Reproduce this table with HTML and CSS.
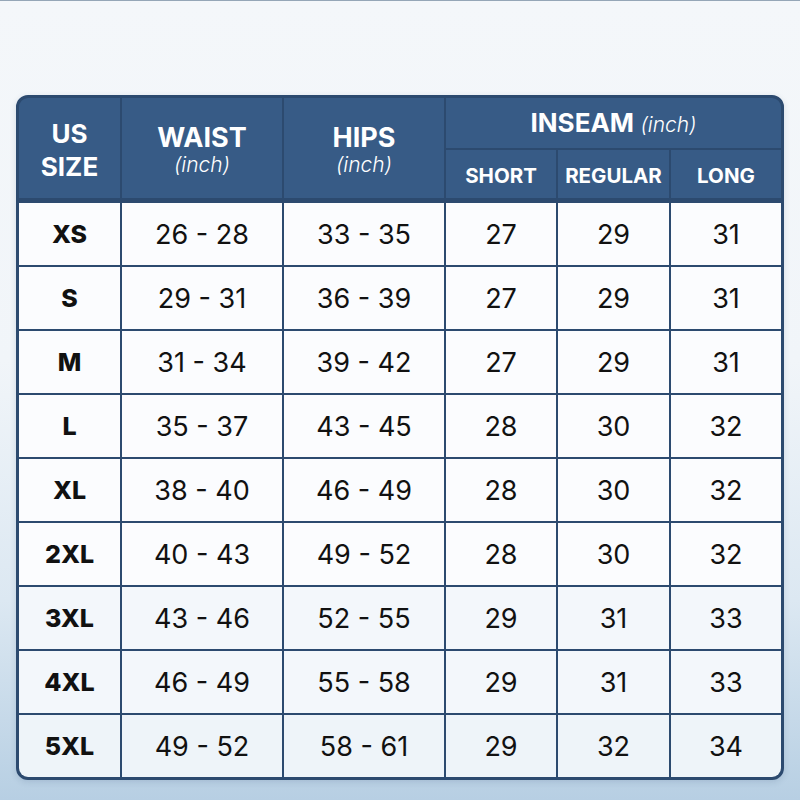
FILE: index.html
```html
<!DOCTYPE html>
<html>
<head>
<meta charset="utf-8">
<link rel="stylesheet" href="styles.css">
</head>
<body>
<div class="page">
  <div class="chart">
    <div class="cell head c-size r-span">US<br>SIZE</div>
    <div class="cell head c-waist r-span"><span class="ht">WAIST</span><span class="unit">(inch)</span></div>
    <div class="cell head c-hips r-span"><span class="ht">HIPS</span><span class="unit">(inch)</span></div>
    <div class="cell head c-inseam"><span class="ht">INSEAM</span>&nbsp;<span class="unit">(inch)</span></div>
    <div class="cell head sub">SHORT</div>
    <div class="cell head sub">REGULAR</div>
    <div class="cell head sub">LONG</div>
    <div class="hline"></div>

    <div class="cell lbl">XS</div><div class="cell">26 - 28</div><div class="cell">33 - 35</div><div class="cell">27</div><div class="cell">29</div><div class="cell">31</div>
    <div class="cell lbl">S</div><div class="cell">29 - 31</div><div class="cell">36 - 39</div><div class="cell">27</div><div class="cell">29</div><div class="cell">31</div>
    <div class="cell lbl">M</div><div class="cell">31 - 34</div><div class="cell">39 - 42</div><div class="cell">27</div><div class="cell">29</div><div class="cell">31</div>
    <div class="cell lbl">L</div><div class="cell">35 - 37</div><div class="cell">43 - 45</div><div class="cell">28</div><div class="cell">30</div><div class="cell">32</div>
    <div class="cell lbl">XL</div><div class="cell">38 - 40</div><div class="cell">46 - 49</div><div class="cell">28</div><div class="cell">30</div><div class="cell">32</div>
    <div class="cell lbl">2XL</div><div class="cell">40 - 43</div><div class="cell">49 - 52</div><div class="cell">28</div><div class="cell">30</div><div class="cell">32</div>
    <div class="cell lbl">3XL</div><div class="cell">43 - 46</div><div class="cell">52 - 55</div><div class="cell">29</div><div class="cell">31</div><div class="cell">33</div>
    <div class="cell lbl">4XL</div><div class="cell">46 - 49</div><div class="cell">55 - 58</div><div class="cell">29</div><div class="cell">31</div><div class="cell">33</div>
    <div class="cell lbl">5XL</div><div class="cell">49 - 52</div><div class="cell">58 - 61</div><div class="cell">29</div><div class="cell">32</div><div class="cell">34</div>
  </div>
</div>
</body>
</html>
```
FILE: styles.css
```css
html, body {
  margin: 0;
  padding: 0;
}
body {
  width: 800px;
  height: 800px;
  overflow: hidden;
  font-family: "Inter", "Open Sans", sans-serif;
}
.page {
  width: 800px;
  height: 800px;
  box-sizing: border-box;
  padding: 94px 16px 0 16px;
  border-top: 1px solid #95a6b7;
  background: linear-gradient(180deg, #f4f7fa 0%, #f1f5f9 45%, #dce8f2 75%, #b7cfe3 100%);
}
.chart {
  width: 768px;
  box-sizing: border-box;
  border: 3px solid #2c4a6f;
  border-radius: 12px;
  overflow: hidden;
  background: #2c4a6f;
  display: grid;
  grid-template-columns: 101px 160px 160px 110px 111px 110px;
  grid-template-rows: 50px 48px 1px repeat(9, 62px);
  column-gap: 2px;
  row-gap: 2px;
  box-shadow: 0 2px 6px rgba(40, 70, 110, 0.15);
}
.cell {
  display: flex;
  align-items: center;
  justify-content: center;
  background: #fbfcfe;
  color: #111;
  font-size: 27px;
  font-weight: 400;
}
.chart > .cell:nth-last-child(-n+18) { background: #f3f7fb; }
.chart > .cell:nth-last-child(-n+6) { background: #eef4f9; }
.head {
  background: #375b86;
  color: #fff;
  font-weight: 700;
  flex-direction: column;
  text-align: center;
  line-height: 33px;
}
.r-span {
  grid-row: 1 / 3;
  font-size: 26px;
  padding-top: 3px;
}
.r-span .ht { line-height: 31px; }
.ht {
  font-size: 27px;
  font-weight: 700;
}
.unit {
  font-size: 21px;
  font-weight: 300;
  font-style: italic;
  line-height: 24px;
}
.c-inseam {
  grid-column: 4 / 7;
  flex-direction: row;
  align-items: baseline;
  padding-top: 8px;
  box-sizing: border-box;
}
.c-inseam .ht { font-size: 26px; }
.sub {
  font-size: 20.5px;
  font-weight: 700;
  padding-top: 3px;
}
.hline {
  grid-column: 1 / -1;
  background: #2c4a6f;
}
.lbl {
  font-weight: 800;
  font-size: 25px;
}
```
